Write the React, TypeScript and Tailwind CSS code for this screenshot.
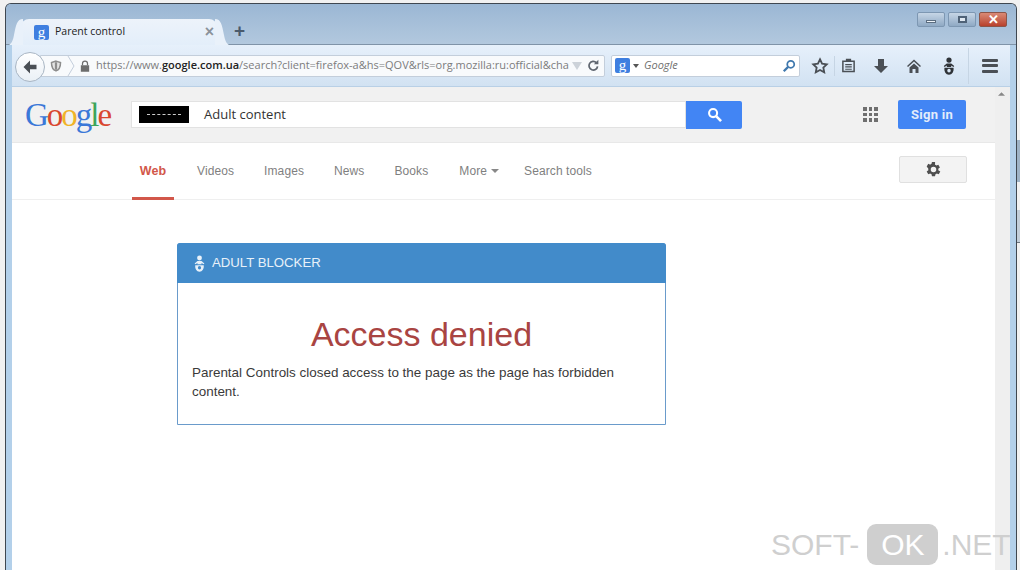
import React from 'react'

// ── Small drawn icons ────────────────────────────────────────────────

function GIcon({ size = 15 }: { size?: number }) {
  return (
    <span
      className="flex items-center justify-center bg-[#3f7fe0] rounded-[2px] text-white shrink-0 font-['Liberation_Serif',serif]"
      style={{ width: size, height: size, fontSize: size }}
    >
      g
    </span>
  )
}

function BabyIcon({ className, color }: { className?: string; color: string }) {
  return (
    <svg viewBox="0 0 16 20" className={className} fill={color}>
      <circle cx="8" cy="3.200" r="3" />
      <path d="M2 10 5.500 7h5L14 10l-.9 1L10.500 9.500V11h-5V9.500L2.900 11z" />
      <path fillRule="evenodd" d="M2.800 12h10.400c.6 4.200-1.700 8-5.200 8s-5.800-3.800-5.200-8zM6 15.200a2 2.200 0 1 0 4 0 2 2.200 0 1 0-4 0z" />
    </svg>
  )
}

function ToolbarIcons() {
  const c = '#4a4f55'
  return (
    <div className="flex items-center h-full">
      <svg viewBox="0 0 20 20" className="w-[18px] h-[18px] ml-[11px]" fill="none" stroke={c} strokeWidth="2">
        <path d="M10 2.500l2.300 4.900 5.200.7-3.800 3.600 1 5.300L10 14.400 5.300 17l1-5.300L2.500 8.100l5.200-.7z" />
      </svg>
      <div className="w-px h-[20px] bg-[#c6d5e4] ml-[5px]" />
      <svg viewBox="0 0 16 16" className="w-[15px] h-[15px] ml-[6px]" fill="none" stroke={c} strokeWidth="1.600">
        <path d="M2 3.500h12v11H2z" />
        <path d="M4.500 7h7M4.500 9.500h7M4.500 12h7" strokeWidth="1.300" />
        <path d="M6 1.500h4v2H6z" fill={c} />
      </svg>
      <svg viewBox="0 0 16 16" className="w-[16px] h-[16px] ml-[17px]" fill={c}>
        <path d="M5 1h6v7h4l-7 7-7-7h4z" />
      </svg>
      <svg viewBox="0 0 16 16" className="w-[16px] h-[16px] ml-[17px]" fill={c}>
        <path d="M8 1.500 1 8l1 1 6-5.500L14 9l1-1z" />
        <path d="M3.500 9.500 8 5.500l4.500 4V15H9.500v-4h-3v4h-3z" />
      </svg>
      <BabyIcon className="w-[14px] h-[18px] ml-[20px]" color="#2f3338" />
      <div className="w-px h-[36px] bg-[#c6d5e4] ml-[12px]" />
      <div className="flex flex-col gap-[2.500px] ml-[13px]">
        <div className="w-[16px] h-[3px] bg-[#4a4f55] rounded-[1px]" />
        <div className="w-[16px] h-[3px] bg-[#4a4f55] rounded-[1px]" />
        <div className="w-[16px] h-[3px] bg-[#4a4f55] rounded-[1px]" />
      </div>
    </div>
  )
}

// ── Window chrome ────────────────────────────────────────────────────

function TitleBar() {
  return (
    <div className="relative h-[41px] flex items-end bg-gradient-to-b from-[#9bb7d4] to-[#b2c8de] border-b border-[#7f93a8] pl-[15px]">
      <div className="relative w-[196px] h-[26px] -mb-px flex items-center rounded-t-[8px] bg-gradient-to-b from-[#edf3fa] to-[#e3eefa] pl-[13px] pr-[3px]">
        <svg viewBox="0 0 14 26" className="absolute -left-[12px] bottom-0 w-[14px] h-[26px]">
          <path d="M14 0C8 0 7 6 5 16 4 22 2 25 0 26h14z" fill="#e9f1fa" />
        </svg>
        <svg viewBox="0 0 14 26" className="absolute -right-[12px] bottom-0 w-[14px] h-[26px]">
          <path d="M0 0c6 0 7 6 9 16 1 6 3 9 5 10H0z" fill="#e9f1fa" />
        </svg>
        <GIcon />
        <span className="ml-[6px] flex-1 text-[10.500px] text-[#222] font-['Open_Sans',sans-serif]">Parent control</span>
        <span className="text-[16px] leading-none font-bold text-[#8b929a] font-['Liberation_Sans',sans-serif]">×</span>
      </div>
      <span className="ml-[17px] mb-[4px] text-[19px] leading-[19px] font-bold text-[#4a5a6c] font-['Liberation_Sans',sans-serif]">+</span>

      {/* window buttons */}
      <div className="absolute right-[9px] top-[8px] flex gap-[3px]">
        <div className="w-[28px] h-[15px] flex items-end justify-center pb-[3px] rounded-[2px] border border-[#7d97b2] bg-gradient-to-b from-[#c6d6e6] to-[#8fa9c4]">
          <div className="w-[10px] h-[3px] bg-[#eef3f8] border border-[#5b6d80]" />
        </div>
        <div className="w-[28px] h-[15px] flex items-center justify-center rounded-[2px] border border-[#7d97b2] bg-gradient-to-b from-[#c6d6e6] to-[#8fa9c4]">
          <div className="w-[9px] h-[7px] border-2 border-[#4f6277] bg-[#dfe8f1]" />
        </div>
        <div className="w-[28px] h-[15px] flex items-center justify-center rounded-[2px] border border-[#8c5549] bg-gradient-to-b from-[#d98a76] to-[#b8402c]">
          <span className="text-[13px] leading-none font-bold text-white font-['Liberation_Sans',sans-serif]">✕</span>
        </div>
      </div>
    </div>
  )
}

function NavToolbar() {
  return (
    <div className="relative h-[42px] flex items-center bg-gradient-to-b from-[#e6f0fb] to-[#d2e2f2] border-b border-[#b9d0e6] pl-[28px]">
      {/* back button overlaps the url bar */}
      <div className="absolute left-[3px] top-[7px] w-[30px] h-[30px] flex items-center justify-center rounded-full bg-gradient-to-b from-white to-[#eaf0f6] border border-[#a9b6c4] z-10">
        <svg viewBox="0 0 16 16" className="w-[16px] h-[16px]" fill="#4a4f55">
          <path d="M8 1.500 1.500 8 8 14.500v-4.300h6.500V5.800H8z" />
        </svg>
      </div>

      <div className="w-[565px] h-[22px] flex items-center bg-[#f8fafc] border border-[#c3cedb] rounded-r-[2px] font-['Open_Sans',sans-serif] text-[11px] whitespace-nowrap">
        <svg viewBox="0 0 16 16" className="w-[12px] h-[12px] ml-[9px] shrink-0" fill="#e4e4e4" stroke="#8d8d8d" strokeWidth="2">
          <path d="M8 1.500 14 3.500c0 6-2 9.500-6 11-4-1.500-6-5-6-11z" />
          <path d="M8 3v10" strokeWidth="3" />
        </svg>
        <svg viewBox="0 0 8 22" className="w-[8px] h-[22px] ml-[5px] shrink-0" fill="none" stroke="#c3cedb">
          <path d="M1 1l6 10-6 10" />
        </svg>
        <svg viewBox="0 0 12 14" className="w-[10px] h-[12px] ml-[5px] shrink-0" fill="#6d6d6d">
          <path d="M1 6h10v8H1z" />
          <path d="M3 6V4a3 3 0 0 1 6 0v2" fill="none" stroke="#6d6d6d" strokeWidth="1.500" />
        </svg>
        <div className="ml-[6px] w-[471px] text-[#7c7c7c]">
          https://www.<span className="text-[#222] font-semibold">google.com.ua</span>/search?client=firefox-a&amp;hs=QOV&amp;rls=org.mozilla:ru:official&amp;cha
        </div>
        <svg viewBox="0 0 10 8" className="w-[10px] h-[8px] ml-[5px] shrink-0" fill="#ccd2d9">
          <path d="M0 0h10L5 8z" />
        </svg>
        <svg viewBox="0 0 16 16" className="w-[13px] h-[13px] ml-[5px] shrink-0" fill="none" stroke="#5f6670" strokeWidth="2.200">
          <path d="M13 9a5.300 5.300 0 1 1-1.500-4.500" />
          <path d="M14 1v5.500H8.500z" fill="#5f6670" stroke="none" />
        </svg>
      </div>

      <div className="ml-[6px] w-[189px] h-[22px] flex items-center bg-white border border-[#c3cedb] rounded-[2px] pl-[3px]">
        <GIcon size={15} />
        <svg viewBox="0 0 6 4" className="w-[6px] h-[4px] ml-[3px]" fill="#555"><path d="M0 0h6L3 4z" /></svg>
        <span className="ml-[5px] flex-1 text-[11px] italic text-[#707070] font-['Open_Sans',sans-serif]">Google</span>
        <svg viewBox="0 0 16 16" className="w-[14px] h-[14px] mr-[3px]" fill="none" stroke="#3f78ad" strokeWidth="2">
          <circle cx="10" cy="6" r="4" />
          <path d="M7 9l-5 5" strokeWidth="2.600" />
        </svg>
      </div>

      <ToolbarIcons />
    </div>
  )
}

// ── Google page ──────────────────────────────────────────────────────

function GoogleHeader() {
  return (
    <div className="h-[56px] flex items-center bg-[#f1f1f1] border-b border-[#e8e8e8]">
      <div className="w-[119px] pl-[13px] text-[33px] leading-[40px] tracking-[-2px] font-['Liberation_Serif',serif]">
        <span className="text-[#3b78d8]">G</span>
        <span className="text-[#d9472f]">o</span>
        <span className="text-[#f0b429]">o</span>
        <span className="text-[#3b78d8]">g</span>
        <span className="text-[#3ba55a]">l</span>
        <span className="text-[#d9472f]">e</span>
      </div>
      <div className="w-[555px] h-[27px] flex items-center bg-white border border-[#e2e2e2] pl-[7px]">
        <div className="w-[50px] h-[17px] flex items-center justify-center bg-black">
          <div className="w-[34px] border-t border-dashed border-[#ccc]" />
        </div>
        <span className="ml-[15px] text-[13px] text-[#333] font-['Open_Sans',sans-serif]">Adult content</span>
      </div>
      <div className="w-[56px] h-[28px] flex items-center justify-center bg-[#4285f4] rounded-r-[2px]">
        <svg viewBox="0 0 16 16" className="w-[15px] h-[15px]" fill="none" stroke="#fff" strokeWidth="2.200">
          <circle cx="6.500" cy="6.500" r="4.300" />
          <path d="M10 10l5 5" strokeWidth="2.800" />
        </svg>
      </div>
      <div className="ml-[121px] w-[15px] h-[15px] grid grid-cols-3 gap-[2px]">
        {Array.from({ length: 9 }).map((_, i) => (
          <div key={i} className="bg-[#6f6f6f]" />
        ))}
      </div>
      <div className="ml-[20px] w-[68px] h-[29px] flex items-center justify-center rounded-[2px] bg-[#4285f4] text-[13px] font-bold text-[#e3ecfb] font-['Roboto',sans-serif] tracking-[0.300px]">
        Sign in
      </div>
    </div>
  )
}

function GoogleNav() {
  const items = ['Videos', 'Images', 'News', 'Books']
  return (
    <div className="h-[57px] flex items-stretch bg-white border-b border-[#efefef] pl-[120px] font-['Liberation_Sans',sans-serif] text-[12px] tracking-[0.100px] text-[#7f7f7f]">
      <div className="w-[42px] flex items-center justify-center -mb-px border-b-[3px] border-[#d2574a] font-bold text-[#d2574a] text-[12.500px] pt-[3px]">
        Web
      </div>
      <div className="flex items-center gap-[30px] ml-[23px]">
        {items.map(t => (
          <span key={t}>{t}</span>
        ))}
        <span className="flex items-center gap-[4px] ml-[1px]">
          More
          <svg viewBox="0 0 8 4" className="w-[8px] h-[4px]" fill="#888"><path d="M0 0h8L4 4z" /></svg>
        </span>
        <span className="-ml-[5px]">Search tools</span>
      </div>
      <div className="ml-auto mr-[28px] mb-[4px] self-center w-[68px] h-[27px] flex items-center justify-center bg-[#f3f3f3] border border-[#e0e0e0] rounded-[2px]">
        <svg viewBox="0 0 24 24" className="w-[19px] h-[19px]" fill="#4f4f4f">
          <path d="M19.400 13c.05-.33.1-.66.1-1s-.05-.67-.1-1l2.100-1.650-2-3.460-2.500 1a7.300 7.300 0 0 0-1.700-1L15.400 2.500h-4l-.4 2.390c-.6.25-1.170.59-1.700 1l-2.500-1-2 3.460L6.900 11c-.05.33-.1.66-.1 1s.05.67.1 1l-2.100 1.650 2 3.460 2.500-1c.53.41 1.100.75 1.700 1l.4 2.390h4l.4-2.390c.6-.25 1.170-.59 1.700-1l2.500 1 2-3.460zM13.400 15.500a3.500 3.500 0 1 1 0-7 3.500 3.500 0 0 1 0 7z" transform="translate(-1.400)" />
        </svg>
      </div>
    </div>
  )
}

function BlockerCard() {
  return (
    <div className="ml-[165px] mt-[43px] w-[489px] h-[182px] border border-[#6a9bcb] rounded-t-[3px] font-['Liberation_Sans',sans-serif]">
      <div className="h-[40px] flex items-center bg-[#428bca] -mx-px -mt-px pl-[16px] rounded-t-[3px]">
        <BabyIcon className="w-[13px] h-[17px]" color="#e8f1f9" />
        <span className="ml-[6px] text-[13.200px] text-[#e8f1f9]">ADULT BLOCKER</span>
      </div>
      <div className="pt-[31px] px-[14px]">
        <h1 className="text-center text-[34px] leading-[40px] text-[#a94442]">Access denied</h1>
        <p className="mt-[9px] text-[13.450px] leading-[19px] text-[#3a3a3a]">
          Parental Controls closed access to the page as the page has forbidden content.
        </p>
      </div>
    </div>
  )
}

export default function App() {
  return (
    <div className="relative w-[1020px] h-[570px] overflow-hidden bg-[#f1f1f1] pl-[5px] pt-[3px]">
      <div className="w-[1012px] h-[580px] flex flex-col border-t border-x border-[#3f4750] rounded-t-[6px] bg-[#b3d0ea] overflow-hidden">
        <TitleBar />
        <div className="flex-1 flex flex-col pl-[6px] pr-[6px]">
          <NavToolbar />
          <div className="flex-1 flex">
            <div className="flex-1 flex flex-col bg-white">
              <GoogleHeader />
              <GoogleNav />
              <BlockerCard />
            </div>
            <div className="w-[15px] bg-[#efefef] flex justify-center pt-[5px] pr-[2px]">
              <svg viewBox="0 0 8 4" className="w-[7px] h-[4px]" fill="#888"><path d="M0 4h8L4 0z" /></svg>
            </div>
          </div>
        </div>
      </div>

      {/* bits of the window behind, showing past the right edge */}
      <div className="absolute right-0 top-[140px] w-[3px] h-[42px] bg-[#9fb3c6]" />
      <div className="absolute right-0 top-[210px] w-[3px] h-[32px] bg-[#c3ced9]" />
      <div className="absolute right-0 top-[242px] w-[3px] h-px bg-[#6d7680]" />

      {/* watermark */}
      <div className="absolute left-[771px] top-[524px] h-[41px] flex items-center text-[30px] text-[#cfcfcf] font-['Liberation_Sans',sans-serif]">
        <span>SOFT-</span>
        <span className="ml-[8px] w-[71px] h-[41px] flex items-center justify-center rounded-[9px] bg-[#cfcfcf] text-white">OK</span>
        <span className="ml-[4px]">.NET</span>
      </div>
    </div>
  )
}
